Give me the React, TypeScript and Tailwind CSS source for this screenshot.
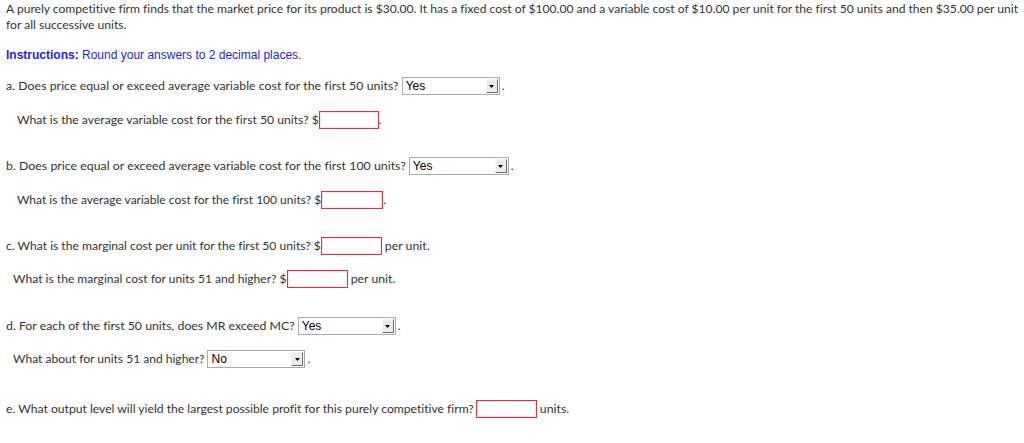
import React from 'react';

const body = "font-['Lato','Liberation_Sans',sans-serif] text-[12.3px] text-[#333333] [font-variant-ligatures:none]";

function Dropdown({ value, width = 'w-[98px]' }: { value: string; width?: string }) {
  return (
    <div className={`flex h-[18px] ${width} items-stretch border border-[#ababab] bg-white`}>
      <span className="flex flex-1 items-center pl-[3px] font-['Liberation_Sans',Arial,sans-serif] text-[12px] leading-none text-black">
        {value}
      </span>
      <span className="my-[1px] mr-[1px] flex w-[12px] items-center justify-center border-t border-l border-r border-b border-t-[#f4f4f4] border-l-[#f4f4f4] border-r-[#6b6b6b] border-b-[#6b6b6b] bg-[#ececec]">
        <svg width="5" height="3" viewBox="0 0 5 3">
          <path d="M0 0h5L2.5 3z" fill="#000" />
        </svg>
      </span>
    </div>
  );
}

function Blank({ width = 'w-[60px]' }: { width?: string }) {
  return <span className={`inline-block h-[18px] ${width} border border-[#dc3540] bg-white shadow-[inset_0_0_0_1px_#fbe3e5]`} />;
}

export default function App() {
  return (
    <div className={`min-h-[443px] w-[1024px] bg-white pl-[6px] pr-[2px] pt-[1px] ${body}`}>
      <p className="text-[12.1px] leading-[16px]">
        A purely competitive firm finds that the market price for its product is $30.00. It has a fixed cost of $100.00 and a
        variable cost of $10.00 per unit for the first 50 units and then $35.00 per unit for all successive units.
      </p>

      <p className="mt-[14px] font-['Liberation_Sans',Arial,sans-serif] text-[12px] leading-[16px] text-[#2323e6]">
        <span className="font-bold">Instructions:</span> Round your answers to 2 decimal places.
      </p>

      <div className="mt-[14px] flex h-[18px] items-center gap-[3px]">
        <span className="tracking-[0.04px]">a. Does price equal or exceed average variable cost for the first 50 units?</span>
        <Dropdown value="Yes" />
        <span className="-ml-[1px]">.</span>
      </div>

      <div className="mt-[16px] flex h-[18px] items-center pl-[11px]">
        <span className="text-[12.2px]">What is the average variable cost for the first 50 units? $</span>
        <Blank />
        <span>.</span>
      </div>

      <div className="mt-[28px] flex h-[18px] items-center gap-[3px]">
        <span className="tracking-[0.03px]">b. Does price equal or exceed average variable cost for the first 100 units?</span>
        <Dropdown value="Yes" width="w-[100px]" />
        <span className="-ml-[1px]">.</span>
      </div>

      <div className="mt-[16px] flex h-[18px] items-center pl-[11px]">
        <span className="text-[12px]">What is the average variable cost for the first 100 units? $</span>
        <Blank width="w-[62px]" />
        <span>.</span>
      </div>

      <div className="mt-[28px] flex h-[18px] items-center">
        <span className="text-[12.1px]">c. What is the marginal cost per unit for the first 50 units? $</span>
        <Blank width="w-[61px]" />
        <span className="ml-[3px]">per unit.</span>
      </div>

      <div className="mt-[15px] flex h-[18px] items-center pl-[7px]">
        <span className="text-[12.1px]">What is the marginal cost for units 51 and higher? $</span>
        <Blank width="w-[61px]" />
        <span className="ml-[3px]">per unit.</span>
      </div>

      <div className="mt-[29px] flex h-[18px] items-center gap-[3px]">
        <span>d. For each of the first 50 units, does MR exceed MC?</span>
        <Dropdown value="Yes" />
        <span className="-ml-[1px]">.</span>
      </div>

      <div className="mt-[15px] flex h-[18px] items-center gap-[3px] pl-[7px]">
        <span className="text-[12.05px]">What about for units 51 and higher?</span>
        <Dropdown value="No" />
        <span className="-ml-[1px]">.</span>
      </div>

      <div className="mt-[32px] flex h-[18px] items-center gap-[2px]">
        <span className="text-[12.15px]">e. What output level will yield the largest possible profit for this purely competitive firm?</span>
        <Blank width="w-[61px]" />
        <span className="ml-[1px]">units.</span>
      </div>
    </div>
  );
}
